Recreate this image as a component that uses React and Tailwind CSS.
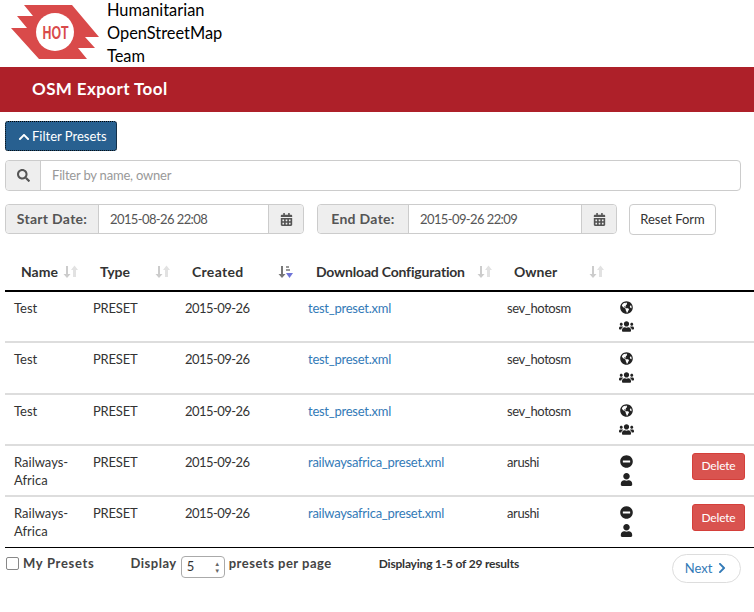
import React from 'react';
import { FaSearch, FaChevronUp, FaChevronRight, FaCalendarAlt, FaGlobeAmericas, FaUsers, FaMinusCircle, FaUser } from 'react-icons/fa';

const rows = [
  { name: 'Test', file: 'test_preset.xml', date: '2015-09-26', owner: 'sev_hotosm', shared: true },
  { name: 'Test', file: 'test_preset.xml', date: '2015-09-26', owner: 'sev_hotosm', shared: true },
  { name: 'Test', file: 'test_preset.xml', date: '2015-09-26', owner: 'sev_hotosm', shared: true },
  { name: 'Railways-Africa', file: 'railwaysafrica_preset.xml', date: '2015-09-26', owner: 'arushi', shared: false },
  { name: 'Railways-Africa', file: 'railwaysafrica_preset.xml', date: '2015-09-26', owner: 'arushi', shared: false },
];

const Logo = () => (
  <svg width="90" height="56" viewBox="0 0 90 56">
    <path d="M13 0 H61 L88 32 H74 L84 43 H67 L76 54 H28 L0 23 H16 L6 11 H22 Z" fill="#d94a4a" />
    <circle cx="44" cy="27" r="19" fill="#fff" />
    <text x="44.5" y="34" textAnchor="middle" fontSize="18" fontWeight="700" fill="#d94a4a" fontFamily="'Liberation Sans', sans-serif" textLength="26" lengthAdjust="spacingAndGlyphs">HOT</text>
  </svg>
);

const SortIcon = ({ active }) => (
  <svg width="15" height="14" viewBox="0 0 15 14" className="shrink-0">
    <path d="M3 1 H5 V9 H7.5 L4 13 L0.5 9 H3 Z" fill={active ? '#777' : '#ccc'} />
    {active ? (
      <>
        <path d="M8 1 H11 V3 H8 Z M8 4 H12 V6 H8 Z" fill="#999" />
        <path d="M8 8 H15 L11.5 13 Z" fill="#6f74d8" />
      </>
    ) : (
      <path d="M11.5 0.5 L15 5 H13 V12 H10 V5 H8 Z" fill="#e2e2e2" />
    )}
  </svg>
);

const DateGroup = ({ label, value, labelW, inputW }) => (
  <div className="flex h-[30px] rounded border border-[#ccc]">
    <div className={`flex items-center justify-center ${labelW} bg-[#eee] font-bold text-sm text-[#555] tracking-[0.3px] rounded-l border-r border-[#ccc]`}>{label}</div>
    <div className={`flex items-center pl-[11px] pt-px ${inputW} bg-white text-[13px] tracking-[-0.6px] text-[#555]`}>{value}</div>
    <div className="flex items-center justify-center w-[35px] bg-[#eee] text-[#555] rounded-r border-l border-[#ccc]">
      <FaCalendarAlt className="text-[13px]" />
    </div>
  </div>
);

const HeadCell = ({ label, active, className }) => (
  <th className={`pr-[7px] pb-[8px] pt-[2px] text-left align-middle ${className}`}>
    <div className="flex items-center justify-between h-[20px]">
      <span className="font-bold text-sm text-[#333] whitespace-nowrap">{label}</span>
      <SortIcon active={active} />
    </div>
  </th>
);

export default function App() {
  return (
    <div className="h-[612px] w-[754px] overflow-hidden bg-white text-[13px] text-[#333] font-['Lato','Liberation_Sans',sans-serif]">
      <header className="flex h-[67px] pl-[11px] overflow-hidden">
        <div className="pt-[5px]"><Logo /></div>
        <div className="ml-[6px] -mt-[2px] w-[130px] text-[16.4px] leading-[23px] text-black">Humanitarian OpenStreetMap Team</div>
      </header>
      <div className="flex items-center h-[45px] pl-8 pb-px bg-[#ae2029] text-white font-bold text-[17px] tracking-[0.4px]">OSM Export Tool</div>

      <div className="px-[5px] pt-[9px]">
        <button className="flex items-center h-[30px] w-[112px] pl-3 pt-px rounded-[3px] bg-[#286090] border border-dotted border-black text-white text-[13px]">
          <FaChevronUp className="text-[12px] mr-[2px]" />Filter Presets
        </button>

        <div className="flex h-[31px] w-[736px] mt-[9px] rounded border border-[#ccc]">
          <div className="flex items-center justify-center w-[35px] bg-[#eee] text-[#555] rounded-l border-r border-[#ccc]">
            <FaSearch className="text-[13px]" />
          </div>
          <div className="flex items-center pl-[11px] tracking-[-0.2px] text-[#999]">Filter by name, owner</div>
        </div>

        <div className="flex items-start mt-[13px]">
          <DateGroup label="Start Date:" value="2015-08-26 22:08" labelW="w-[93px]" inputW="w-[169px]" />
          <div className="ml-[13px]">
            <DateGroup label="End Date:" value="2015-09-26 22:09" labelW="w-[91px]" inputW="w-[172px]" />
          </div>
          <button className="ml-3 h-[31px] w-[87px] rounded border border-[#ccc] bg-white text-[13px] text-[#333]">Reset Form</button>
        </div>
      </div>

      <table className="ml-[5px] mt-[25px] w-[749px] table-fixed border-collapse">
        <colgroup>
          <col className="w-[80px]" />
          <col className="w-[92px]" />
          <col className="w-[123px]" />
          <col className="w-[199px]" />
          <col className="w-[112px]" />
          <col className="w-[143px]" />
        </colgroup>
        <thead>
          <tr className="border-b-2 border-black">
            <HeadCell label="Name" className="pl-[16px]" />
            <HeadCell label="Type" className="pl-[15px]" />
            <HeadCell label="Created" active className="pl-[15px] tracking-[0.3px]" />
            <HeadCell label="Download Configuration" className="pl-[16px] tracking-[-0.2px]" />
            <HeadCell label="Owner" className="pl-[15px]" />
            <th />
          </tr>
        </thead>
        <tbody>
          {rows.map((row, i) => (
            <tr key={i} className={`h-[51.25px] align-top ${i === 4 ? 'border-b border-black' : 'border-b-2 border-[#ddd]'}`}>
              <td className="pl-[9px] pt-[7px] leading-[18px] pr-3">{row.name}</td>
              <td className="pl-2 pt-[7px] leading-[18px] tracking-[-0.2px]">PRESET</td>
              <td className="pl-2 pt-[7px] leading-[18px] tracking-[-0.55px]">{row.date}</td>
              <td className="pl-2 pt-[7px] leading-[18px] tracking-[-0.25px] text-[#337ab7]">{row.file}</td>
              <td className="pl-2 pt-[7px] leading-[18px] tracking-[-0.4px]">{row.owner}</td>
              <td className="pl-2 pt-[9px]">
                <div className="flex justify-between items-start text-[#222]">
                  <div className="flex flex-col items-center w-[14px] gap-[5px]">
                    {row.shared ? <FaGlobeAmericas className="text-[13px]" /> : <FaMinusCircle className="text-[13px]" />}
                    {row.shared ? <FaUsers className="text-[15px]" /> : <FaUser className="text-[13px]" />}
                  </div>
                  {!row.shared && (
                    <button className="mr-[9px] -mt-[2px] h-[27px] w-[53px] rounded-[3px] bg-[#d9534f] border border-[#d43f3a] text-white text-xs tracking-[-0.2px]">Delete</button>
                  )}
                </div>
              </td>
            </tr>
          ))}
        </tbody>
      </table>

      <div className="flex items-start pl-[6px] pr-[13px] pt-[7px]">
        <div className="flex items-center h-[18px] font-bold text-[#444] tracking-[0.7px]">
          <span className="w-[13px] h-[13px] border border-[#888] rounded-[2px] mr-[4px]" />My Presets
        </div>
        <div className="flex items-center h-[18px] ml-[36px] font-bold text-[#444] tracking-[0.5px]">
          Display
          <span className="flex items-center justify-between w-[44px] h-[22px] mx-[4px] mt-[6px] pl-[5px] pr-[3px] border border-[#aaa] rounded font-normal text-[#333]">
            5<span className="text-[6px] leading-[7px] text-[#666]">▲<br />▼</span>
          </span>
          presets per page
        </div>
        <div className="ml-[47px] h-[18px] flex items-center font-bold text-xs tracking-[-0.2px] text-[#333]">Displaying 1-5 of 29 results</div>
        <div className="ml-auto -mt-px flex items-center justify-center w-[69px] h-[29px] rounded-full border border-[#ddd] text-[#337ab7]">
          Next<FaChevronRight className="text-[12px] ml-[4px]" />
        </div>
      </div>
    </div>
  );
}
